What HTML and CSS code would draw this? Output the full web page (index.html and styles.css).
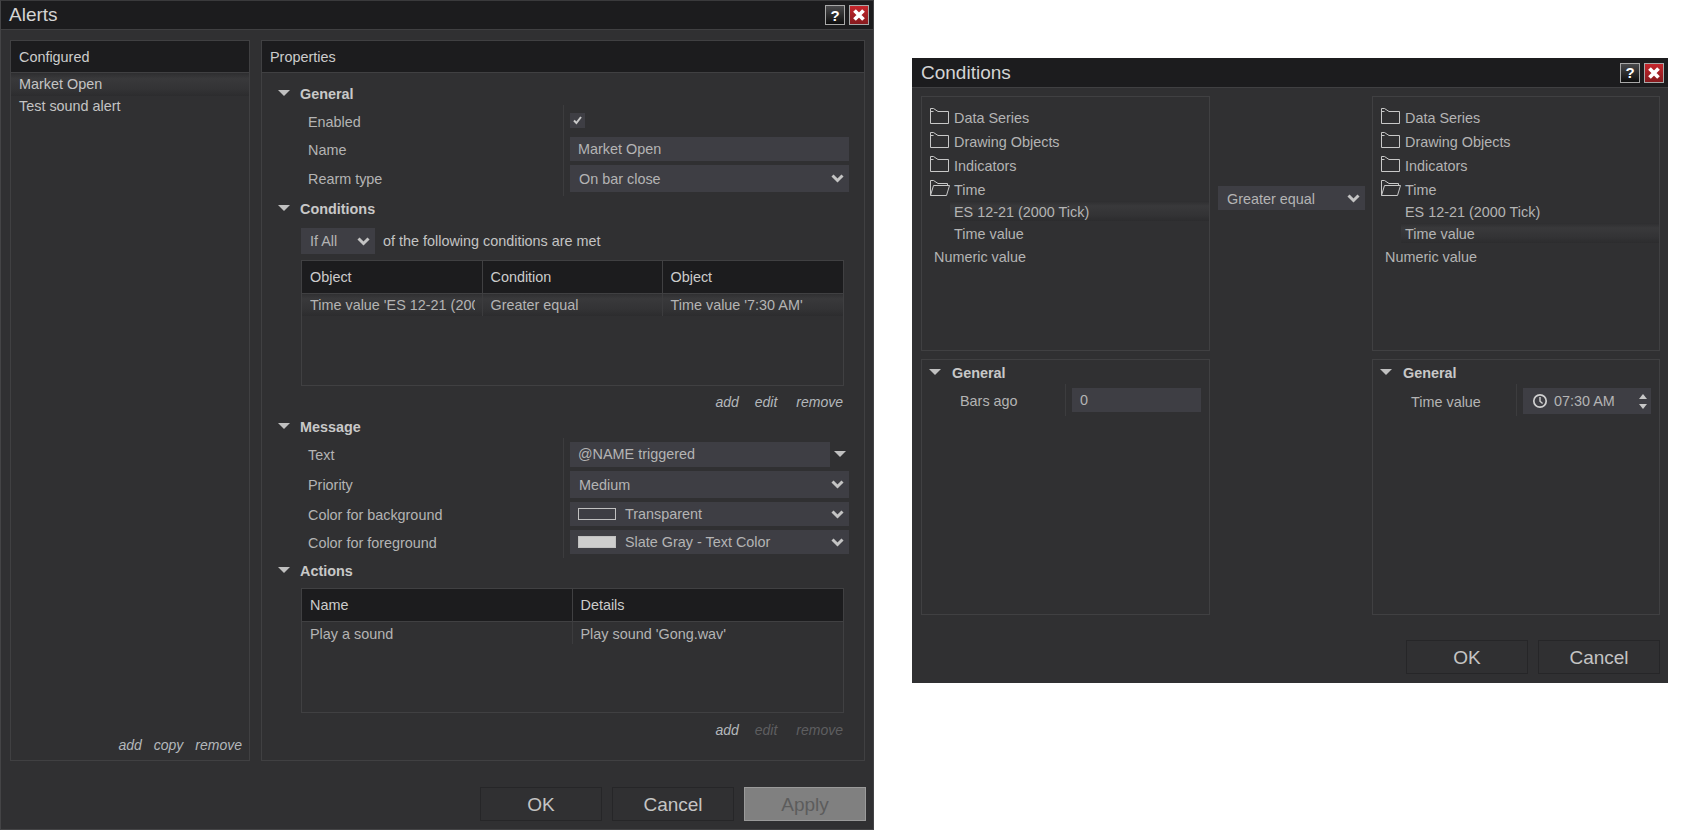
FILE: index.html
```html
<!DOCTYPE html>
<html lang="en">
<head>
  <meta charset="UTF-8" />
  <title>Alerts</title>
  <link rel="stylesheet" href="styles.css">
</head>
<body>
  <svg class="defs" width="0" height="0">
    <symbol id="chev" viewBox="0 0 13 9"><path d="M1.5 1.5 6.5 6.5 11.5 1.5" fill="none" stroke="currentColor" stroke-width="3"/></symbol>
    <symbol id="folder" viewBox="0 0 19 16"><path d="M.5 15.5V.5H3.5L8 3.5H18.5V15.5ZM.5 3.5H3.5" fill="none" stroke="currentColor"/></symbol>
    <symbol id="folder-open" viewBox="0 0 20 16"><path d="M.5 15.5V.5H3.5L8 3.5H17.5V5.5M.5 15.5H16.5L19.5 5.5H3.5Z" fill="none" stroke="currentColor"/></symbol>
    <symbol id="x" viewBox="0 0 14 14"><path d="M2.5 2.5 11.5 11.5M11.5 2.5 2.5 11.5" fill="none" stroke="currentColor" stroke-width="3.8"/></symbol>
  </svg>

  <!-- ALERTS -->
  <div class="window alerts">
    <div class="titlebar">
      <span class="title">Alerts</span>
      <button class="win-btn help">?</button>
      <button class="win-btn close"><svg width="14" height="14"><use href="#x"/></svg></button>
    </div>

    <div class="alerts-main">
      <div class="panel configured">
        <div class="panel-head">Configured</div>
        <div class="list-item selected">Market Open</div>
        <div class="list-item">Test sound alert</div>
        <div class="links tight">
          <span>add</span><span>copy</span><span>remove</span>
        </div>
      </div>

      <div class="panel properties">
        <div class="panel-head">Properties</div>
        <div class="props">
          <div class="section"><i class="tri"></i>General</div>
          <div class="row row-check">
            <div class="label">Enabled</div>
            <div class="value"><span class="check"><svg width="11" height="10" viewBox="0 0 11 10"><path d="M2 5.5 4.4 8 9 2" fill="none" stroke="#c8c8c8" stroke-width="2"/></svg></span></div>
          </div>
          <div class="row">
            <div class="label">Name</div>
            <div class="value"><div class="field">Market Open</div></div>
          </div>
          <div class="row row-last">
            <div class="label">Rearm type</div>
            <div class="value"><div class="field select tall">On bar close<svg class="chev"><use href="#chev"/></svg></div></div>
          </div>

          <div class="section sec-cond"><i class="tri"></i>Conditions</div>
          <div class="if-line">
            <div class="field select if-all">If All<svg class="chev"><use href="#chev"/></svg></div>
            <span>of the following conditions are met</span>
          </div>
          <div class="grid-wrap">
            <table class="grid">
              <colgroup><col class="c1"><col class="c1"><col></colgroup>
              <tr><th>Object</th><th>Condition</th><th>Object</th></tr>
              <tr class="selected"><td><div class="cell">Time value 'ES 12-21 (2000 Tick)'</div></td><td>Greater equal</td><td>Time value '7:30 AM'</td></tr>
            </table>
          </div>
          <div class="links"><span>add</span><span>edit</span><span>remove</span></div>

          <div class="section sec-msg"><i class="tri"></i>Message</div>
          <div class="row row-combo">
            <div class="label">Text</div>
            <div class="value combo"><div class="field">@NAME triggered</div><i class="tri small"></i></div>
          </div>
          <div class="row row-flat">
            <div class="label">Priority</div>
            <div class="value"><div class="field select tall">Medium<svg class="chev"><use href="#chev"/></svg></div></div>
          </div>
          <div class="row">
            <div class="label">Color for background</div>
            <div class="value"><div class="field select color"><span class="swatch"></span>Transparent<svg class="chev"><use href="#chev"/></svg></div></div>
          </div>
          <div class="row row-end">
            <div class="label">Color for foreground</div>
            <div class="value"><div class="field select color"><span class="swatch solid"></span>Slate Gray - Text Color<svg class="chev"><use href="#chev"/></svg></div></div>
          </div>

          <div class="section sec-act"><i class="tri"></i>Actions</div>
          <div class="grid-wrap short">
            <table class="grid actions">
              <colgroup><col class="half"><col></colgroup>
              <tr><th>Name</th><th>Details</th></tr>
              <tr><td>Play a sound</td><td>Play sound 'Gong.wav'</td></tr>
            </table>
          </div>
          <div class="links last"><span>add</span><span class="off">edit</span><span class="off">remove</span></div>
        </div>
      </div>
    </div>

    <div class="footer">
      <button class="btn">OK</button>
      <button class="btn">Cancel</button>
      <button class="btn disabled">Apply</button>
    </div>
  </div>

  <!-- CONDITIONS -->
  <div class="window conditions">
    <div class="titlebar">
      <span class="title">Conditions</span>
      <button class="win-btn help">?</button>
      <button class="win-btn close"><svg width="14" height="14"><use href="#x"/></svg></button>
    </div>

    <div class="cond-main">
      <div class="panel tree">
        <div class="node"><svg class="ico"><use href="#folder"/></svg>Data Series</div>
        <div class="node"><svg class="ico"><use href="#folder"/></svg>Drawing Objects</div>
        <div class="node"><svg class="ico"><use href="#folder"/></svg>Indicators</div>
        <div class="node open"><svg class="ico wide"><use href="#folder-open"/></svg>Time</div>
        <div class="leaf selected">ES 12-21 (2000 Tick)</div>
        <div class="leaf">Time value</div>
        <div class="root-leaf">Numeric value</div>
      </div>

      <div class="middle">
        <div class="field select tall-mid">Greater equal<svg class="chev"><use href="#chev"/></svg></div>
      </div>

      <div class="panel tree">
        <div class="node"><svg class="ico"><use href="#folder"/></svg>Data Series</div>
        <div class="node"><svg class="ico"><use href="#folder"/></svg>Drawing Objects</div>
        <div class="node"><svg class="ico"><use href="#folder"/></svg>Indicators</div>
        <div class="node open"><svg class="ico wide"><use href="#folder-open"/></svg>Time</div>
        <div class="leaf">ES 12-21 (2000 Tick)</div>
        <div class="leaf selected">Time value</div>
        <div class="root-leaf">Numeric value</div>
      </div>

      <div class="panel mini">
        <div class="section"><i class="tri"></i>General</div>
        <div class="mini-row">
          <div class="label">Bars ago</div>
          <div class="value"><div class="field">0</div></div>
        </div>
      </div>

      <div></div>

      <div class="panel mini">
        <div class="section"><i class="tri"></i>General</div>
        <div class="mini-row row-time">
          <div class="label">Time value</div>
          <div class="value">
            <div class="field time">
              <svg width="16" height="16" viewBox="0 0 16 16"><circle cx="8" cy="8" r="6.2" fill="none" stroke="#d0d0d0" stroke-width="1.7"/><path d="M8 4V8.3L10.6 10.6" fill="none" stroke="#d0d0d0" stroke-width="1.4"/></svg>
              <span>07:30 AM</span>
              <span class="spin"><i class="up"></i><i class="down"></i></span>
            </div>
          </div>
        </div>
      </div>
    </div>

    <div class="footer cond-footer">
      <button class="btn">OK</button>
      <button class="btn">Cancel</button>
    </div>
  </div>
</body>
</html>
```

FILE: styles.css
```css
:root {
  --bg: #303032;
  --head: #1c1c1e;
  --line: #404042;
  --field: #3e3e44;
  --txt: #c4c4c4;
  --soft: #b4b4b4;
}
* { box-sizing: border-box; }
body {
  margin: 0;
  background: #fff;
  display: flex;
  align-items: flex-start;
  font-family: 'Liberation Sans', Arial, sans-serif;
  font-size: 14.4px;
  color: var(--txt);
}
.defs { position: absolute; }
button { font-family: inherit; }

/* --- WINDOWS --- */
.window {
  background: var(--bg);
  flex: none;
}
.alerts {
  width: 874px;
  height: 830px;
  border: 1px solid #444446;
  border-top-color: #3a3a3c;
}
.conditions {
  width: 756px;
  height: 625px;
  margin: 58px 0 0 38px;
}
.titlebar {
  display: flex;
  align-items: center;
  gap: 4px;
  height: 30px;
  padding: 0 4px 0 8px;
  background: var(--head);
  border-bottom: 1px solid #404042;
}
.alerts .titlebar { height: 29px; }
.conditions .titlebar { padding-left: 9px; }
.title {
  flex: 1;
  font-size: 19px;
  color: #d4d4d4;
}
.win-btn {
  width: 20px;
  height: 20px;
  padding: 0;
  border: 1px solid #a8a8a8;
  display: flex;
  align-items: center;
  justify-content: center;
  color: #fff;
  font-size: 15px;
  font-weight: bold;
}
.help { background: linear-gradient(#4a4a4c, #0e0e0e); }
.close { background: linear-gradient(#c5262c, #861a1e); }

/* --- PANELS --- */
.panel { border: 1px solid var(--line); }
.panel-head {
  height: 32px;
  line-height: 32px;
  padding-left: 8px;
  background: var(--head);
  border-bottom: 1px solid #404042;
  color: #cccccc;
}
.alerts-main {
  display: flex;
  gap: 11px;
  padding: 10px 0 0 9px;
  height: 731px;
}
.configured {
  width: 240px;
  display: flex;
  flex-direction: column;
}
.properties { width: 604px; }
.list-item {
  height: 23px;
  line-height: 23px;
  padding-left: 8px;
}
.list-item + .list-item { line-height: 21px; }
.selected {
  background: linear-gradient(#2e2e30, #39393b 25%, #333335 70%, #2c2c2e);
}

/* --- PROPERTIES --- */
.props { padding: 10px 15px 0 16px; }
.section {
  display: flex;
  align-items: center;
  height: 22px;
  font-weight: bold;
  color: #c8c8c8;
}
.tri {
  display: block;
  width: 0;
  height: 0;
  border-left: 6.5px solid transparent;
  border-right: 6.5px solid transparent;
  border-top: 6.5px solid #c0c0c0;
  margin-right: 10px;
  position: relative;
  top: -1px;
}
.tri.small { margin: 0 3px 0 4px; border-left-width: 6px; border-right-width: 6px; }
.sec-cond { margin-top: 2px; }
.sec-msg { margin-top: 6px; }
.sec-act { margin-top: 2px; }
.row { display: flex; }
.label {
  width: 285px;
  padding-left: 30px;
  align-self: center;
  color: var(--soft);
  position: relative;
  top: 1px;
}
.row-check .label { top: 2px; }
.row-last .label { top: -1px; }
.row-flat .label, .row-end .label { top: 0; }
.value {
  flex: 1;
  padding: 2px 0 2px 6px;
  border-left: 1px solid #3c3c3e;
}
.row-check .value {
  height: 30px;
  display: flex;
  align-items: center;
}
.row-last .value { padding-bottom: 4px; }
.row-combo .value { padding-top: 4px; display: flex; align-items: center; }
.row-end .value { padding-bottom: 4px; }
.check {
  width: 15px;
  height: 15px;
  background: var(--field);
  display: flex;
  align-items: center;
  justify-content: center;
}
.field {
  height: 24px;
  line-height: 24px;
  padding-left: 8px;
  background: var(--field);
  color: var(--soft);
  flex: 1;
}
.combo .field { height: 25px; }
.select {
  display: flex;
  align-items: center;
  justify-content: space-between;
  padding: 0 5px 0 9px;
}
.tall { height: 27px; }
.chev {
  width: 13px;
  height: 9px;
  color: #c4c4c4;
}
.color {
  justify-content: flex-start;
  padding-left: 8px;
}
.color .chev { margin-left: auto; }
.swatch {
  width: 38px;
  height: 12px;
  margin-right: 9px;
  border: 1px solid #c0c0c0;
}
.swatch.solid { background: #cdcdcd; }
.if-line {
  display: flex;
  align-items: center;
  gap: 8px;
  margin: 8px 0 0 23px;
  height: 26px;
}
.if-all {
  flex: none;
  width: 74px;
  height: 26px;
}

/* --- TABLES --- */
.grid-wrap {
  width: 543px;
  height: 126px;
  margin: 6px 0 0 23px;
  border: 1px solid var(--line);
}
.grid-wrap.short { height: 125px; }
.grid {
  width: 100%;
  border-collapse: collapse;
  table-layout: fixed;
}
.c1 { width: 180px; }
.half { width: 270px; }
.grid th {
  height: 32px;
  background: var(--head);
  border-left: 1px solid #404042;
  border-bottom: 1px solid #404042;
  padding: 0 7px 0 8px;
  text-align: left;
  font-weight: normal;
  color: #cccccc;
}
.grid td {
  height: 23px;
  padding: 0 7px 0 8px;
  border-left: 1px solid #3c3c3e;
  white-space: nowrap;
  color: var(--soft);
}
.grid.actions td { padding-top: 2px; }
.grid th:first-child, .grid td:first-child { border-left: none; }
.cell { overflow: hidden; }
.links {
  display: flex;
  justify-content: flex-end;
  gap: 16px;
  margin: 8px 0 0 0;
  padding-right: 6px;
  font-style: italic;
  font-size: 14px;
  color: #b4b8bc;
  height: 16px;
  line-height: 16px;
}
.links.last { margin-top: 9px; }
.links .off { color: #5e5e60; }
.links.tight {
  gap: 12px;
  margin-top: auto;
  padding: 0 7px 7px 0;
  height: 23px;
}
.props .links span:last-child { margin-left: 3px; }

/* --- FOOTER --- */
.footer {
  display: flex;
  justify-content: flex-end;
  gap: 10px;
  padding: 26px 7px 0 0;
}
.btn {
  width: 122px;
  height: 34px;
  padding: 2px 0 0;
  background: var(--bg);
  border: 1px solid #262628;
  color: var(--txt);
  font-size: 19px;
}
.btn.disabled {
  background: #808080;
  border-color: #9a9a9a;
  color: #5c5c5c;
}
.cond-footer { padding: 25px 8px 0 0; }

/* --- CONDITIONS --- */
.cond-main {
  display: grid;
  grid-template-columns: 289px 162px 288px;
  grid-template-rows: 255px 256px;
  row-gap: 8px;
  padding: 8px 0 0 9px;
}
.tree { padding-top: 9px; }
.node {
  display: flex;
  align-items: center;
  height: 24px;
  padding-left: 8px;
  color: var(--soft);
}
.node.open { height: 23px; }
.ico {
  width: 19px;
  height: 16px;
  margin-right: 5px;
  color: #c8c8c8;
  position: relative;
  top: -2px;
}
.ico.wide { width: 20px; margin-right: 4px; }
.leaf {
  height: 20px;
  line-height: 22px;
  margin-left: 28px;
  padding-left: 4px;
  color: var(--soft);
}
.leaf + .leaf { margin-top: 2px; }
.root-leaf {
  height: 22px;
  line-height: 22px;
  margin-top: 3px;
  padding-left: 12px;
  color: var(--soft);
}
.middle { padding: 90px 7px 0 8px; }
.tall-mid { height: 24px; padding-top: 1px; }
.mini { padding-top: 2px; }
.mini .section { padding-left: 7px; }
.mini .tri {
  border-left-width: 6px;
  border-right-width: 6px;
  margin-right: 11px;
}
.mini-row { display: flex; height: 32px; }
.mini-row .label {
  width: 143px;
  padding-left: 38px;
  top: 1px;
}
.row-time .label { top: 2px; }
.mini-row .value {
  padding: 4px 8px 0 6px;
}
.time {
  display: flex;
  align-items: center;
  height: 26px;
  padding-left: 9px;
  gap: 6px;
}
.time .spin {
  margin-left: auto;
  margin-right: 4px;
  display: flex;
  flex-direction: column;
  gap: 5px;
}
.spin i {
  display: block;
  width: 0;
  height: 0;
  border-left: 4.5px solid transparent;
  border-right: 4.5px solid transparent;
}
.spin .up { border-bottom: 5px solid #c8c8c8; }
.spin .down { border-top: 5px solid #c8c8c8; }
```
